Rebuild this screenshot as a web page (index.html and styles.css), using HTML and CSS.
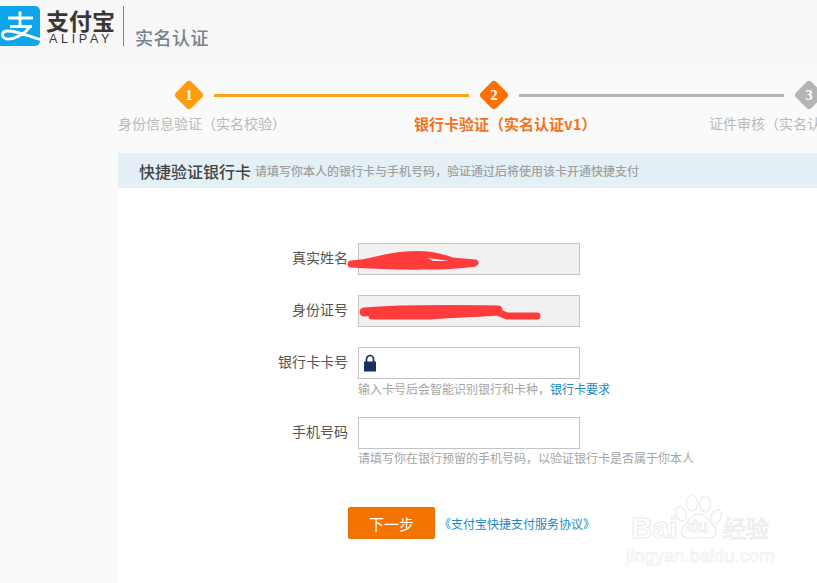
FILE: index.html
```html
<!DOCTYPE html>
<html lang="zh-CN">
<head>
<meta charset="utf-8">
<title>实名认证</title>
<link rel="stylesheet" href="styles.css">
</head>
<body>
<header class="top">
  <svg class="logo-mark" width="40" height="40" viewBox="0 0 40 40" aria-hidden="true">
    <rect x="-4" width="44" height="40" rx="5" fill="#0ea5ec"/>
    <g fill="none" stroke="#fff" stroke-width="2.8">
      <path d="M8 12H33M20 5.5V20M10 20.5H32"/>
      <path d="M30 20.5C25 28 15 33.5 7 33 1 32 1 25.5 7 25 16 24.5 28 30 40 33.5"/>
    </g>
  </svg>
  <div class="brand">
    <div class="brand-cn">支付宝</div>
    <div class="brand-en">ALIPAY</div>
  </div>
  <div class="rule"></div>
  <div class="page-title">实名认证</div>
</header>

<main class="main">
  <div class="steps">
    <div class="diamond d-done">1</div>
    <div class="line l-done"></div>
    <div class="diamond d-now">2</div>
    <div class="line l-todo"></div>
    <div class="diamond d-todo">3</div>
  </div>
  <div class="labels">
    <div class="label l1">身份信息验证（实名校验）</div>
    <div class="label l2">银行卡验证（实名认证v1）</div>
    <div class="label l3">证件审核（实名认证）</div>
  </div>

  <section class="card">
    <div class="card-head">
      <h2>快捷验证银行卡</h2>
      <span>请填写你本人的银行卡与手机号码，验证通过后将使用该卡开通快捷支付</span>
    </div>
    <div class="form">
      <div class="row">
        <div class="name">真实姓名</div>
        <div class="field filled"></div>
      </div>
      <div class="row">
        <div class="name">身份证号</div>
        <div class="field filled"></div>
      </div>
      <div class="row">
        <div class="name">银行卡卡号</div>
        <div class="field">
          <svg class="lock" width="14" height="18" viewBox="0 0 14 18" aria-hidden="true">
            <path d="M3.5 8V5a3.5 3.5 0 0 1 7 0V8" fill="none" stroke="#1a2f63" stroke-width="1.7"/>
            <rect x="1" y="7.5" width="12" height="10" fill="#1a2f63"/>
          </svg>
        </div>
      </div>
      <div class="hint hint-card">输入卡号后会智能识别银行和卡种，<a>银行卡要求</a></div>
      <div class="row row-phone">
        <div class="name">手机号码</div>
        <div class="field"></div>
      </div>
      <div class="hint">请填写你在银行预留的手机号码，以验证银行卡是否属于你本人</div>
      <div class="actions">
        <button class="next">下一步</button>
        <a class="terms">《支付宝快捷支付服务协议》</a>
      </div>
    </div>
  </section>
</main>

<svg class="scribble" width="817" height="583" viewBox="0 0 817 583" aria-hidden="true">
  <g fill="none" stroke="#ff3b3b" stroke-linecap="round" stroke-linejoin="round">
    <path d="M351 264C372 263 385 256 405 255 425 253 440 256 452 261L475 263C450 267 400 267 351 264Z" fill="#ff3b3b" stroke-width="7"/>
    <path d="M364 312C400 309 440 309 498 310" stroke-width="9"/>
    <path d="M372 316H430C450 314 475 314 497 312L507 316H537" stroke-width="7"/>
  </g>
  <path d="M428 258L449 261 433 261Z" fill="#f1f1f1"/>
</svg>

<div class="mark">
  <svg class="paw" width="50" height="50" viewBox="0 0 50 50" aria-hidden="true">
    <g fill="#fff" stroke="#ebebeb" stroke-width="1.2">
      <ellipse cx="6" cy="21" rx="5" ry="7.5" transform="rotate(-25 6 21)"/>
      <ellipse cx="17" cy="10" rx="5.5" ry="8"/>
      <ellipse cx="30" cy="11" rx="5.5" ry="8"/>
      <ellipse cx="41" cy="24" rx="5" ry="7.5" transform="rotate(25 41 24)"/>
      <path d="M24 21C31 21 34 28 38 32 44 38 40 46 32 45 27 44 21 44 15 45 7 46 4 39 9 33 14 28 17 21 24 21Z"/>
    </g>
  </svg>
  <span class="mark-bai">Bai</span>
  <span class="mark-du">du</span>
  <span class="mark-cn">经验</span>
  <div class="mark-url">jingyan.baidu.com</div>
</div>
</body>
</html>
```

FILE: styles.css
```css
* { box-sizing: border-box; }
html, body { margin: 0; height: 100%; }
body {
  width: 817px;
  height: 583px;
  overflow: hidden;
  position: relative;
  background: #fafafa;
  font-family: "Liberation Sans", "Noto Sans CJK SC", sans-serif;
}

.top {
  height: 64px;
  background: #f7f7f7;
  display: flex;
  align-items: flex-start;
  padding-top: 6px;
}
.logo-mark { display: block; flex: none; }
.brand { margin-left: 6px; width: 72px; }
.brand-cn {
  font: 700 23px/24px "Noto Sans CJK SC", sans-serif;
  color: #3b3636;
  margin-top: 2px;
}
.brand-en {
  font-size: 12.5px;
  line-height: 13px;
  letter-spacing: 3.7px;
  color: #3b3636;
  margin: 1px 0 0 3px;
  white-space: nowrap;
}
.rule { width: 1px; height: 40px; background: #7d8287; margin-left: 5px; }
.page-title {
  font: 500 18px/24px "Noto Sans CJK SC", sans-serif;
  letter-spacing: .5px;
  color: #76828f;
  margin: 19px 0 0 11px;
}

.main { padding-left: 118px; width: 1000px; }
.steps {
  display: flex;
  align-items: center;
  height: 30px;
  margin: 16px 0 0 56px;
}
.diamond {
  width: 22px;
  height: 22px;
  margin: 0 4px;
  transform: rotate(45deg);
  border-radius: 4px;
  flex: none;
  color: transparent;
  position: relative;
  font: 700 15px/22px "Liberation Serif", serif;
}
.diamond::after {
  position: absolute;
  left: 0;
  top: 0;
  width: 22px;
  height: 22px;
  text-align: center;
  color: #fff;
  transform: rotate(-45deg);
}
.d-done { background: #ff9d0c; }
.d-done::after { content: "1"; }
.d-now { background: #ff7000; }
.d-now::after { content: "2"; }
.d-todo { background: #b5b5b5; }
.d-todo::after { content: "3"; }
.line { height: 3px; flex: none; margin: 0 10px; }
.l-done { width: 255px; background: #ff9d25; }
.l-todo { width: 265px; background: #b5b5b5; }

.labels {
  display: flex;
  height: 26px;
  align-items: center;
  font-size: 14px;
  font-family: "Noto Sans CJK SC", sans-serif;
}
.label { flex: none; white-space: nowrap; color: #b9b9b9; }
.l1 { width: 296px; }
.l2 { width: 295px; color: #f5721a; font-weight: 700; font-size: 15px; }

.card {
  width: 800px;
  height: 430px;
  background: #fff;
  margin-top: 17px;
}
.card-head {
  height: 35px;
  background: #e5f0f6;
  padding-left: 21px;
  display: flex;
  align-items: center;
  white-space: nowrap;
  font-family: "Noto Sans CJK SC", sans-serif;
}
.card-head h2 {
  margin: 0;
  font-size: 16px;
  font-weight: 500;
  color: #454545;
}
.card-head span {
  margin-left: 4px;
  font-size: 12px;
  font-weight: 500;
  color: #a0a0a0;
}

.form { padding-top: 55px; font-family: "Noto Sans CJK SC", sans-serif; }
.row {
  display: flex;
  align-items: center;
  height: 32px;
  margin-bottom: 20px;
}
.row-phone { margin-top: 20px; margin-bottom: 0; }
.row:nth-child(3) { margin-bottom: 0; }
.name {
  width: 230px;
  text-align: right;
  font-size: 14px;
  color: #555;
  white-space: nowrap;
  padding-bottom: 4px;
}
.field {
  width: 222px;
  height: 32px;
  margin-left: 10px;
  border: 1px solid #c4c4c4;
  background: #fff;
  display: flex;
  align-items: center;
}
.filled { background: #f1f1f1; }
.lock { margin-left: 4px; }
.hint {
  margin: 0 0 0 240px;
  font-size: 12px;
  line-height: 17px;
  height: 17px;
  color: #a5a5a5;
  white-space: nowrap;
}
.hint-card { margin-top: 1px; }
.hint a { color: #1788c9; }
.actions {
  display: flex;
  align-items: center;
  margin: 41px 0 0 230px;
}
.next {
  width: 87px;
  height: 32px;
  padding: 0;
  border: 1px solid #e56e00;
  border-radius: 2px;
  background: #f57300;
  color: #fff;
  font: 400 15px/1 "Noto Sans CJK SC", sans-serif;
}
.terms {
  margin-left: 4px;
  font-size: 12px;
  color: #1788c9;
  white-space: nowrap;
}

.scribble { position: absolute; left: 0; top: 0; pointer-events: none; }

.mark {
  position: absolute;
  left: 625px;
  top: 490px;
  width: 160px;
  height: 80px;
  color: #fff;
  -webkit-text-stroke: 1px #ebebeb;
  white-space: nowrap;
}
.paw { position: absolute; left: 50px; top: 3px; }
.mark-bai { position: absolute; left: 6px; top: 21px; font: 700 30px/34px "Liberation Sans", sans-serif; }
.mark-du { position: absolute; left: 62px; top: 22px; font: 700 17px/30px "Liberation Sans", sans-serif; }
.mark-cn { position: absolute; left: 98px; top: 20px; font: 400 23px/34px "Noto Sans CJK SC", sans-serif; }
.mark-url {
  position: absolute;
  left: 1px;
  top: 56px;
  font: 400 18px/20px "Liberation Sans", sans-serif;
  letter-spacing: .2px;
  -webkit-text-stroke: .7px #eeeeee;
}
```
